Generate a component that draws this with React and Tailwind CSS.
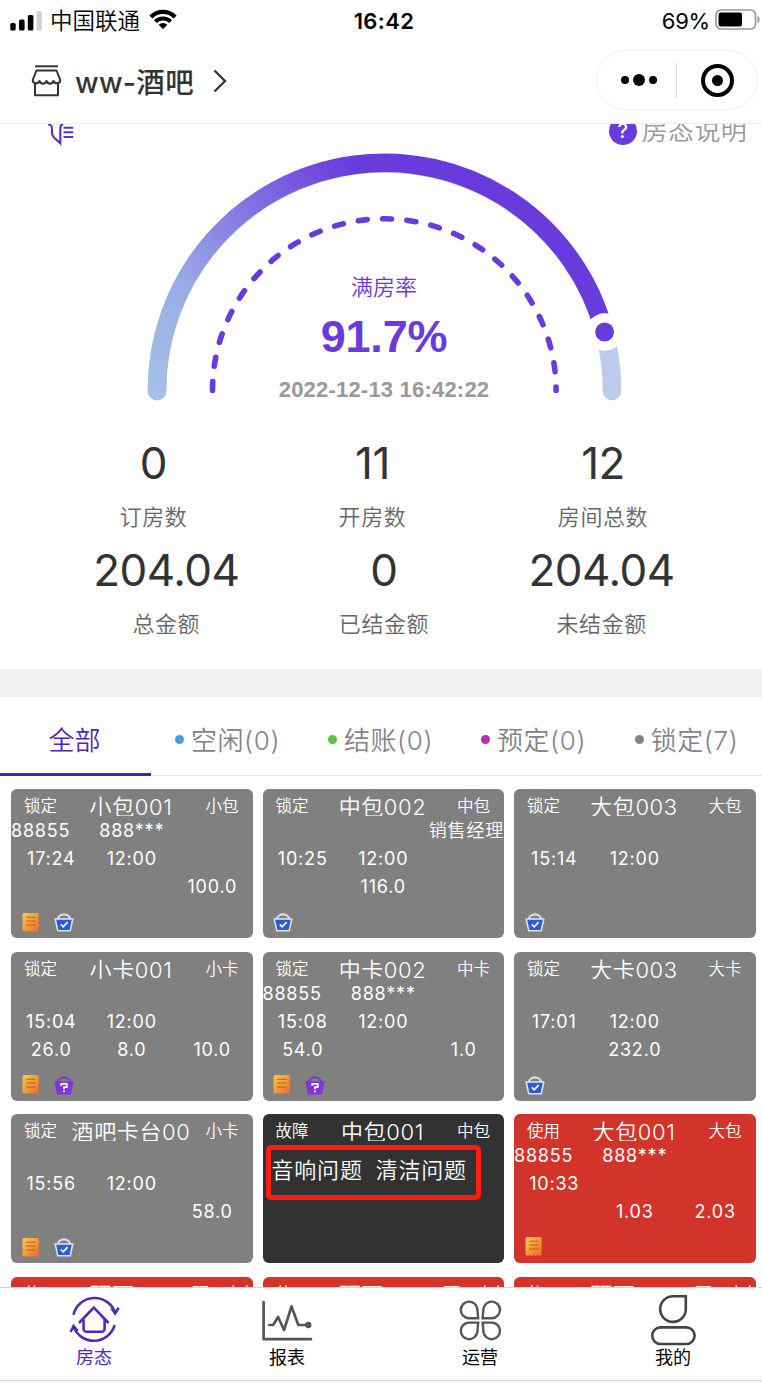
import React from "react";

const stats = [
  [
    { value: "0", label: "订房数", width: "w-[67px]" },
    { value: "11", label: "开房数", width: "w-[67px]" },
    { value: "12", label: "房间总数", width: "w-[90px]" },
  ],
  [
    { value: "204.04", label: "总金额", width: "w-[144px]" },
    { value: "0", label: "已结金额", width: "w-[90px]" },
    { value: "204.04", label: "未结金额", width: "w-[144px]" },
  ],
];

const tabs = [
  { name: "空闲(0)", dot: "bg-[#459de5]" },
  { name: "结账(0)", dot: "bg-[#55c63b]" },
  { name: "预定(0)", dot: "bg-[#b92bab]" },
  { name: "锁定(7)", dot: "bg-[#828282]" },
];

const GRAY = "bg-[#808080]";
const RED = "bg-[#d33429]";
const DARK = "bg-[#323232]";

const rooms = [
  { color: GRAY, status: "锁定", title: "小包001", type: "小包", guest: ["88855", "888***", ""], time: ["17:24", "12:00"], money: ["", "", "100.0"], icons: ["bill", "check"] },
  { color: GRAY, status: "锁定", title: "中包002", type: "中包", guest: ["", "", "销售经理"], time: ["10:25", "12:00"], money: ["", "116.0", ""], icons: ["check"] },
  { color: GRAY, status: "锁定", title: "大包003", type: "大包", time: ["15:14", "12:00"], icons: ["check"] },
  { color: GRAY, status: "锁定", title: "小卡001", type: "小卡", time: ["15:04", "12:00"], money: ["26.0", "8.0", "10.0"], icons: ["bill", "ask"] },
  { color: GRAY, status: "锁定", title: "中卡002", type: "中卡", guest: ["88855", "888***", ""], time: ["15:08", "12:00"], money: ["54.0", "", "1.0"], icons: ["bill", "ask"] },
  { color: GRAY, status: "锁定", title: "大卡003", type: "大卡", time: ["17:01", "12:00"], money: ["", "232.0", ""], icons: ["check"] },
  { color: GRAY, status: "锁定", title: "酒吧卡台00", type: "小卡", time: ["15:56", "12:00"], money: ["", "", "58.0"], icons: ["bill", "check"] },
  { color: DARK, status: "故障", title: "中包001", type: "中包", faults: ["音响问题", "清洁问题"] },
  { color: RED, status: "使用", title: "大包001", type: "大包", guest: ["88855", "888***", ""], time: ["10:33", ""], money: ["", "1.03", "2.03"], icons: ["bill"] },
  { color: RED, status: "使用", title: "预西001", type: "预西大包" },
  { color: RED, status: "使用", title: "预西002", type: "预西大包" },
  { color: RED, status: "使用", title: "预西003", type: "预西大包" },
];

function StatusBar() {
  return (
    <div className="flex h-[41px] shrink-0 items-center text-black">
      <div className="flex flex-1 items-center pl-[10px]">
        <svg className="h-5 w-8" viewBox="0 0 32 20">
          <rect x="0.3" y="12" width="5.4" height="7.5" rx="1.6" />
          <rect x="9" y="8.6" width="5.6" height="10.9" rx="1.6" />
          <rect x="17.8" y="4" width="5.6" height="15.5" rx="1.6" />
          <rect x="26.6" y="0" width="5.2" height="19.5" rx="1.6" fill="#d0d0d0" />
        </svg>
        <span className="ml-2 mt-[2px] text-[22.5px] leading-none font-[350]">中国联通</span>
        <svg className="ml-[9px] mb-[3px] h-5 w-7" viewBox="0 0 28 20">
          <path d="M0.4 6.4a19.3 19.3 0 0 1 27.2 0l-3 3a15 15 0 0 0-21.2 0z" />
          <path d="M5 11.2a12.8 12.8 0 0 1 18 0l-2.9 2.9a8.7 8.7 0 0 0-12.2 0z" />
          <path d="M9.6 15.8a6.3 6.3 0 0 1 8.8 0L14 20z" />
        </svg>
      </div>
      <div className="mt-px mr-1 text-[22px] font-semibold tracking-[0.4px]">16:42</div>
      <div className="flex flex-1 items-center justify-end">
        <span className="mt-px text-[22px] tracking-[-0.2px]">69%</span>
        <svg className="mr-px ml-[5px] mb-[2px] h-[21px] w-[46px]" viewBox="0 0 46 21">
          <rect x="1" y="1" width="39.5" height="19" rx="5" fill="none" stroke="#999" strokeWidth="1.7" />
          <rect x="3.5" y="3.6" width="23.5" height="13.8" rx="2.2" />
          <path d="M42.4 7c3 1 3 6 0 7z" fill="#999" />
        </svg>
      </div>
    </div>
  );
}

function Header() {
  return (
    <div className="flex h-[83px] shrink-0 items-center border-b-[1.5px] border-[#ececec] pl-[31px] pr-1 pb-[6px] text-[#333]">
      <svg className="mt-[4px] h-8 w-[31px]" viewBox="0 0 31 32" fill="none" stroke="#333" strokeWidth="2" strokeLinejoin="round">
        <path d="M4 1.3h23" />
        <path d="M5.5 5.5h20l3.8 9.5c0 4-5.3 4.5-6.8 1-1.5 3.5-5.5 3.5-7 0-1.5 3.5-5.5 3.5-7 0-1.5 3.5-6.8 3-6.8-1z" />
        <path d="M4 18v12.2h23V18" />
      </svg>
      <span className="ml-[13px] mt-[8px] text-[28.5px] font-medium leading-none tracking-[0.3px]">ww-酒吧</span>
      <svg className="ml-[19px] mt-[4px] h-6 w-[14px]" viewBox="0 0 14 24" fill="none" stroke="#333" strokeWidth="2.3">
        <path d="M1.5 1.5L12 12 1.5 22.5" />
      </svg>
      <div className="ml-auto mt-[2px] flex h-[60px] w-[162px] items-center rounded-full border border-[#eee]">
        <div className="flex h-[35px] w-[80px] items-center justify-center gap-1 border-r border-[#d8d8d8] pl-[4px]">
          <span className="h-2 w-2 rounded-full bg-black"></span>
          <span className="h-3 w-3 rounded-full bg-black"></span>
          <span className="h-2 w-2 rounded-full bg-black"></span>
        </div>
        <div className="flex flex-1 justify-center">
          <span className="flex h-[33px] w-[33px] items-center justify-center rounded-full border-4 border-black">
            <span className="h-[11px] w-[11px] rounded-full bg-black"></span>
          </span>
        </div>
      </div>
    </div>
  );
}

function Gauge() {
  return (
    <div className="relative mx-auto h-[262px] w-[500px]">
      <svg className="absolute left-[3px] top-0 h-[262px] w-[500px]" viewBox="134 146 500 262" fill="none">
        <defs>
          <linearGradient id="rate" gradientUnits="userSpaceOnUse" x1="157" y1="391" x2="370" y2="180">
            <stop offset="0" stopColor="#a4bfe9" />
            <stop offset="0.3" stopColor="#9aade6" />
            <stop offset="1" stopColor="#693bdc" />
          </linearGradient>
        </defs>
        <path d="M157 391A227.5 227.5 0 0 1 612 391" stroke="#bccbec" strokeWidth="18.6" strokeLinecap="round" />
        <path d="M157 391A227.5 227.5 0 0 1 604.4 332" stroke="url(#rate)" strokeWidth="18.6" strokeLinecap="round" />
        <circle cx="604.6" cy="332" r="18.8" fill="#fff" />
        <circle cx="604.6" cy="332" r="9.4" fill="#693bdc" />
        <path d="M212.5 390.5A171.8 171.8 0 0 1 556.1 390.5" stroke="#693bdc" strokeWidth="5.6" strokeLinecap="round" strokeDasharray="9 15.36" />
      </svg>
      <div className="relative flex flex-col items-center pt-[129px] pl-[6px]">
        <div className="text-[22px] leading-6 font-[350] text-[#693bdc]">满房率</div>
        <div className="mt-[14px] font-['Liberation_Sans'] text-[45px] leading-[48px] font-bold tracking-[-0.2px] text-[#693bdc]">91.7%</div>
        <div className="mt-[17px] font-['Liberation_Sans'] text-[22px] leading-6 font-bold tracking-[0.2px] text-[#999]">2022-12-13 16:42:22</div>
      </div>
    </div>
  );
}

function Stats() {
  return (
    <div className="pl-11 pr-[38px]">
      {stats.map((row, i) => (
        <div key={i} className="flex h-[106.5px] justify-around">
          {row.map((s, j) => (
            <div key={j} className={`${s.width} flex flex-col items-center whitespace-nowrap`}>
              <span className="text-[44px] leading-[62px] tracking-[-0.5px] text-[#333]">{s.value}</span>
              <span className="mt-[7px] text-[22px] leading-8 font-[350] tracking-[0.6px] text-[#666]">{s.label}</span>
            </div>
          ))}
        </div>
      ))}
    </div>
  );
}

function Tabs() {
  return (
    <div className="flex h-[79px] border-b-[1.5px] border-[#e8e8e8] text-[26px] font-[350]">
      <div className="-mb-px flex w-[151px] shrink-0 items-center justify-center border-b-[3px] border-[#4b22b0] pt-[11px] pr-[2px] text-[#4f27b5]">全部</div>
      {tabs.map((t) => (
        <div key={t.name} className="flex w-[153px] shrink-0 items-center justify-center pt-[9px] text-[#838389]">
          <span className={`mr-[7px] -mt-[3px] h-[9px] w-[9px] rounded-full ${t.dot}`}></span>
          <span className="tracking-[0.6px]">{t.name}</span>
        </div>
      ))}
    </div>
  );
}

function Bill() {
  return (
    <svg className="mr-[15px] h-[19px] w-[17px]" viewBox="0 0 17 19">
      <defs>
        <linearGradient id="bill" x1="0" y1="0" x2="1" y2="1">
          <stop offset="0" stopColor="#f8ce49" />
          <stop offset="1" stopColor="#f1662c" />
        </linearGradient>
      </defs>
      <path d="M0.5 1.5L1.5 0h14.5l0.7 1.5V18l-2 .9-2-.9-2 .9-2-.9-2 .9-2-.9-2 .9L0.5 17.5z" fill="url(#bill)" />
      <path d="M4.3 4.2h9M4.3 8h9M4.3 12h9" stroke="#b5651f" strokeWidth="1.1" />
    </svg>
  );
}

function Basket({ ask }) {
  return (
    <svg className="h-5 w-5" viewBox="0 0 20 20" fill="none">
      <path d="M3.6 7.500a6.500 6.200 0 0 1 12.8 0" stroke={ask ? "#7f35d6" : "#dedede"} strokeWidth="2.1" />
      <path
        d="M1.2 7h17.6l-2.6 11.8H3.8z"
        fill={ask ? "#7f35d6" : "#2e5ad8"}
        stroke={ask ? "#7f35d6" : "#dfe3ee"}
        strokeWidth="1.6"
        strokeLinejoin="round"
      />
      {ask ? (
        <path d="M7.2 10.8V8.8h5.6v3.4H10v2M10 15.4v1.8" stroke="#fff" strokeWidth="1.7" />
      ) : (
        <path d="M6.8 12.4l2.4 2.4 4.4-4.6" stroke="#fff" strokeWidth="1.7" />
      )}
    </svg>
  );
}

function Cells({ values, guest }) {
  const [a, b, c] = values;
  return (
    <div className="grid h-7 grid-cols-3 text-center font-normal">
      <span className={guest ? "text-left" : ""}>{a}</span>
      <span>{b}</span>
      <span className={guest ? "flex justify-end font-[350]" : ""}>{c}</span>
    </div>
  );
}

function RoomCard({ room }) {
  return (
    <div className={`relative h-[149px] overflow-hidden rounded-md text-[18px] leading-7 font-[350] tracking-[0.8px] whitespace-nowrap text-white ${room.color}`}>
      <div className="flex h-[27px] overflow-hidden text-center">
        <span className="w-[59px] text-[16.5px] leading-[34px] tracking-normal">{room.status}</span>
        <span className="w-[122px] overflow-hidden text-[22px] leading-[36px] tracking-[0.6px]">{room.title}</span>
        <span className="w-[60px] text-[16.5px] leading-[34px] tracking-normal">{room.type}</span>
      </div>
      {room.faults ? (
        <div className="flex gap-[13px] pl-[9px] pt-[13px] text-[22px] leading-8">
          {room.faults.map((f) => (
            <span key={f}>{f}</span>
          ))}
        </div>
      ) : (
        <div className="pt-px">
          <Cells values={room.guest || []} guest />
          <Cells values={room.time || []} />
          <Cells values={room.money || []} />
          <div className="flex items-center pt-[11px] pl-[10.5px]">
            {(room.icons || []).map((icon) =>
              icon === "bill" ? <Bill key={icon} /> : <Basket key={icon} ask={icon === "ask"} />
            )}
          </div>
        </div>
      )}
      {room.faults && (
        <div className="absolute left-[3px] top-[31px] h-[55px] w-[215px] rounded-[5px] border-[5px] border-[#ff1e10]"></div>
      )}
    </div>
  );
}

const navItems = [
  {
    name: "房态",
    icon: (
      <g stroke="#4f2bb8" strokeWidth="2.6">
        <path d="M5.5 20.8A21.6 21.6 0 0 1 47 18.6M43.6 14.6l3.5 4.8 3.6-5.6" />
        <path d="M46.6 31.2A21.6 21.6 0 0 1 5.6 32.6M2.6 38l3-6 4 4.8" />
        <path d="M11 29L25.8 13.6 40.6 29M15.6 25.5v9.2a3 3 0 0 0 3 3h15a3 3 0 0 0 3-3v-9.2" />
      </g>
    ),
  },
  {
    name: "报表",
    icon: (
      <g stroke="#555" strokeWidth="2.7" strokeLinejoin="round" strokeLinecap="round">
        <path d="M2.6 8v37.2H50" />
        <path d="M8.3 31h3.8l5-8 6 13 7.4-23.6L37.3 31h10" />
        <circle cx="47.3" cy="31" r="1.8" fill="#555" />
      </g>
    ),
  },
  {
    name: "运营",
    icon: (
      <g stroke="#555" strokeWidth="2.4">
        <path d="M24.2 24.2H14.6A8.3 8.3 0 1 1 23.3 14.6Z" />
        <path d="M28.6 24.2h9.6A8.3 8.3 0 1 0 29.5 14.6Z" />
        <path d="M24.2 28.6H14.6A8.3 8.3 0 1 0 23.3 38.2Z" />
        <path d="M28.6 28.6h9.6A8.3 8.3 0 1 1 29.5 38.2Z" />
      </g>
    ),
  },
  {
    name: "我的",
    icon: (
      <g stroke="#444" strokeWidth="2.6">
        <path d="M38.8 2.3H26.2A12.8 12.8 0 1 0 38.8 15.2Z" />
        <rect x="5.2" y="33.4" width="42.4" height="16.6" rx="8.2" />
      </g>
    ),
  },
];

function NavBar() {
  return (
    <div className="flex h-[96px] shrink-0 flex-col border-t-[1.5px] border-[#d5d5d5] bg-white">
      <div className="flex h-[92px]">
        {navItems.map((item, i) => (
          <div key={item.name} className={`flex w-[193px] shrink-0 flex-col items-center pt-[6px] first:-ml-[2.5px] ${i === 0 ? "text-[#4f2bb8]" : "text-black"}`}>
            <svg className="h-[52px] w-[52px]" viewBox="0 0 52 52" fill="none">
              {item.icon}
            </svg>
            <span className="mt-px text-[18px] leading-[22px]">{item.name}</span>
          </div>
        ))}
      </div>
      <div className="flex-1 border-t border-[#d5d5d5] bg-[#f5f5f5]"></div>
    </div>
  );
}

export default function App() {
  return (
    <div className="flex h-[1383px] w-[762px] flex-col overflow-hidden bg-white font-[Inter,'Noto_Sans_CJK_SC',sans-serif]">
      <StatusBar />
      <Header />
      <div className="flex h-[1163px] shrink-0 flex-col overflow-hidden">
        <div className="-mt-[8px] flex h-[30px] shrink-0 justify-between pl-12 pr-[15px]">
          <svg className="mt-1 h-[26px] w-[26px]" viewBox="0 0 26 26" fill="none" stroke="#5a33c4" strokeWidth="2.2">
            <path d="M0 4.4c3.500 0 4 1.500 4 4.600v4c0 2 .8 3.300 2.200 4.700l6.100 5.600V8.500c0-2.800 1-4.100 3-4.100" />
            <path d="M15.5 7.7h9.7M15.5 12.3h9.7M15.5 17h9.7" strokeWidth="1.9" />
          </svg>
          <div className="flex h-[29px] items-center text-[26px] font-[350] text-[#999]">
            <span className="mr-[5px] flex h-7 w-7 items-center justify-center rounded-full bg-[#693bdc] text-[20px] font-medium text-white">?</span>
            <span className="leading-7 tracking-[0.3px]">房态说明</span>
          </div>
        </div>
        <Gauge />
        <div className="mt-[30px] h-[230px] shrink-0">
          <Stats />
        </div>
        <div className="mt-[7px] h-7 shrink-0 bg-[#f0f0f0]"></div>
        <div className="shrink-0">
          <Tabs />
        </div>
        <div className="grid shrink-0 grid-cols-3 gap-x-[10px] gap-y-[13.5px] pt-[13px] pr-[6.5px] pl-[11px]">
          {rooms.map((room) => (
            <RoomCard key={room.title} room={room} />
          ))}
        </div>
      </div>
      <NavBar />
    </div>
  );
}
